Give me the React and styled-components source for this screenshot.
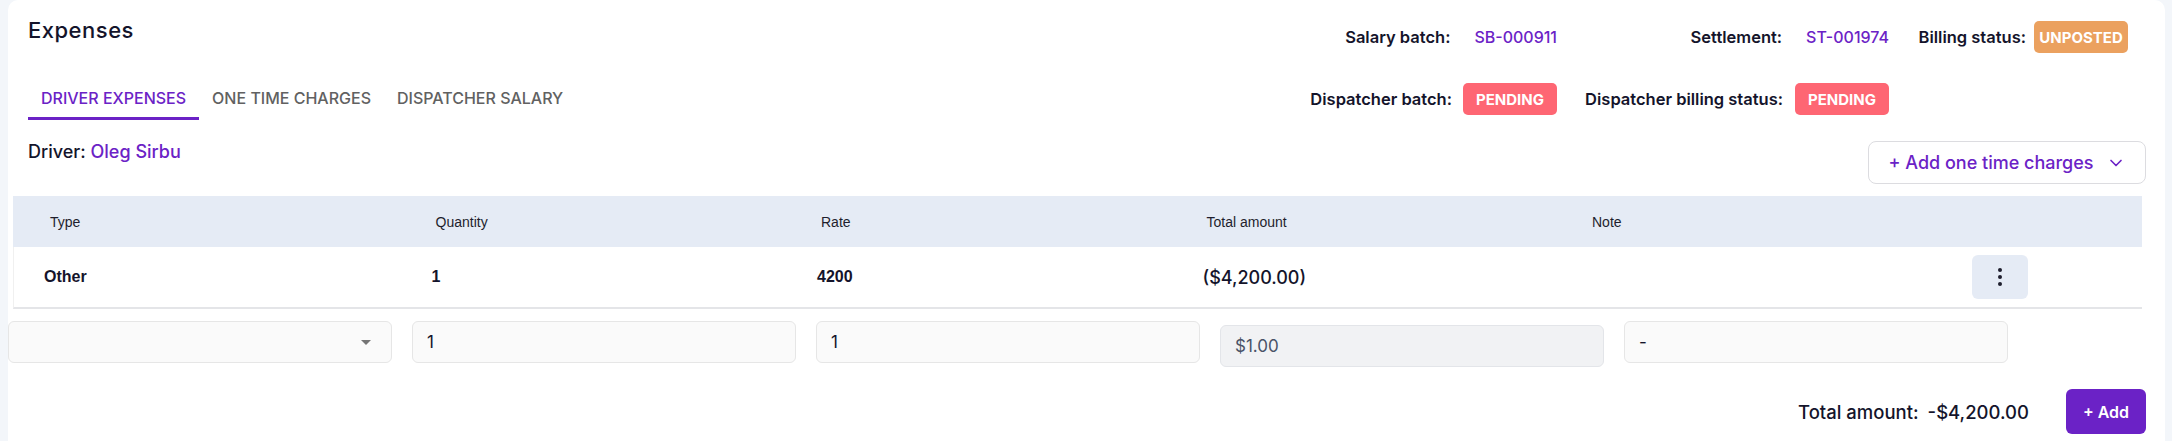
import React from 'react';
import styled, { createGlobalStyle } from 'styled-components';
import { ChevronDown } from 'lucide-react';

const purple = '#6b22c6';
const ink = '#14142b';

const GlobalStyle = createGlobalStyle`
  body {
    margin: 0;
    background: #f3f6fa;
    font-family: Inter, "Noto Sans", sans-serif;
    color: ${ink};
  }
`;

const Card = styled.section`
  margin: 0 7px 0 8px;
  background: #fff;
  border-radius: 10px;
  padding: 16px 0 40px;
  min-height: 470px;
  box-sizing: border-box;
`;

const Top = styled.div`
  display: flex;
  justify-content: space-between;
  padding: 0 37px 0 20px;
`;

const LeftCol = styled.div`
  display: flex;
  flex-direction: column;
`;

const Title = styled.h1`
  margin: 0;
  font-size: 22px;
  line-height: 28px;
  font-weight: 500;
  letter-spacing: 0.5px;
`;

const Tabs = styled.div`
  display: flex;
  margin-top: 32px;
`;

const Tab = styled.div`
  padding: 12px 13px 9px;
  font-size: 16px;
  line-height: 20px;
  font-weight: 500;
  text-transform: uppercase;
  color: ${p => (p.$active ? purple : '#616161')};
  border-bottom: 3px solid ${p => (p.$active ? purple : 'transparent')};
`;

const Meta = styled.div`
  display: grid;
  grid-template-columns: auto 332px 239px;
  grid-auto-rows: 32px;
  row-gap: 30px;
  padding-top: 5px;
`;

const MetaItem = styled.div`
  display: flex;
  align-items: center;
  justify-content: flex-end;
  gap: ${p => p.$gap}px;
`;

const MetaLabel = styled.span`
  font-size: 16.5px;
  font-weight: 600;
  color: ${ink};
`;

const MetaValue = styled.span`
  font-size: 16px;
  font-weight: 500;
  color: ${purple};
`;

const Badge = styled.span`
  display: inline-flex;
  align-items: center;
  justify-content: center;
  width: 94px;
  height: 32px;
  border-radius: 5px;
  background: ${p => p.$bg};
  color: #fff;
  font-size: 15px;
  font-weight: 700;
  text-transform: uppercase;
`;

const DriverRow = styled.div`
  display: flex;
  justify-content: space-between;
  align-items: flex-start;
  padding: 0 19px 0 20px;
  margin-top: 20px;
`;

const DriverText = styled.div`
  font-size: 18px;
  line-height: 24px;
  font-weight: 500;
  span { color: ${purple}; }
`;

const OutlineButton = styled.button`
  margin-top: 1px;
  width: 278px;
  height: 43px;
  display: flex;
  align-items: center;
  justify-content: center;
  gap: 12px;
  border: 1px solid #dcdce0;
  border-radius: 8px;
  background: #fff;
  color: ${purple};
  font-family: Inter, sans-serif;
  font-size: 18px;
  font-weight: 500;
`;

const Table = styled.div`
  margin: 12px 23px 0 5px;
`;

const HeaderRow = styled.div`
  display: grid;
  grid-template-columns: repeat(5, 385.5px) 1fr;
  align-items: center;
  height: 51px;
  background: #e5ebf5;
`;

const HeadCell = styled.div`
  padding-left: 37px;
  font-family: "Liberation Sans", Arial, sans-serif;
  font-size: 14px;
  color: #1e1e2d;
`;

const BodyRow = styled.div`
  display: grid;
  grid-template-columns: repeat(5, 385.5px) 1fr;
  align-items: center;
  height: 60px;
  border-left: 1px solid #f0f0f0;
  border-bottom: 2px solid #e4e5e8;
`;

const Cell = styled.div`
  padding-left: ${p => (p.$first ? 30 : 32)}px;
  font-family: ${p => (p.$amount ? 'Inter, sans-serif' : '"Liberation Sans", Arial, sans-serif')};
  font-size: ${p => (p.$amount ? 18 : 16)}px;
  font-weight: ${p => (p.$amount ? 500 : 700)};
  color: ${ink};
`;

const Kebab = styled.button`
  width: 56px;
  height: 44px;
  border: none;
  border-radius: 6px;
  background: #e5ebf5;
  display: flex;
  align-items: center;
  justify-content: center;
`;

const InputRow = styled.div`
  display: grid;
  grid-template-columns: repeat(5, 384px);
  gap: 20px;
  margin-top: 12px;
  align-items: start;
`;

const Field = styled.div`
  height: 42px;
  margin-top: ${p => (p.$disabled ? 4 : 0)}px;
  box-sizing: border-box;
  display: flex;
  align-items: center;
  justify-content: space-between;
  padding: 0 20px 0 14px;
  border: 1px solid ${p => (p.$disabled ? '#e3e5e9' : '#e6e6e6')};
  border-radius: 6px;
  background: ${p => (p.$disabled ? '#f1f2f4' : '#fafafa')};
  color: ${p => (p.$disabled ? '#4a5368' : ink)};
  font-size: 17px;
`;

const Footer = styled.div`
  display: flex;
  justify-content: flex-end;
  align-items: center;
  gap: 37px;
  padding-right: 19px;
  margin-top: 22px;
`;

const Total = styled.div`
  font-size: 18.5px;
  font-weight: 500;
  span { margin-left: 9px; }
`;

const AddButton = styled.button`
  width: 80px;
  height: 45px;
  border: none;
  border-radius: 6px;
  background: ${purple};
  color: #fff;
  font-family: Inter, sans-serif;
  font-size: 16px;
  font-weight: 600;
`;

const columns = ['Type', 'Quantity', 'Rate', 'Total amount', 'Note', ''];

export default function App() {
  return (
    <>
      <GlobalStyle />
      <Card>
        <Top>
          <LeftCol>
            <Title>Expenses</Title>
            <Tabs>
              <Tab $active>Driver expenses</Tab>
              <Tab>One time charges</Tab>
              <Tab>Dispatcher salary</Tab>
            </Tabs>
          </LeftCol>
          <Meta>
            <MetaItem $gap={24}>
              <MetaLabel>Salary batch:</MetaLabel>
              <MetaValue>SB-000911</MetaValue>
            </MetaItem>
            <MetaItem $gap={24}>
              <MetaLabel>Settlement:</MetaLabel>
              <MetaValue>ST-001974</MetaValue>
            </MetaItem>
            <MetaItem $gap={8}>
              <MetaLabel>Billing status:</MetaLabel>
              <Badge $bg="#eba15f">Unposted</Badge>
            </MetaItem>
            <MetaItem $gap={11}>
              <MetaLabel>Dispatcher batch:</MetaLabel>
              <Badge $bg="#fe6673">Pending</Badge>
            </MetaItem>
            <MetaItem $gap={12}>
              <MetaLabel>Dispatcher billing status:</MetaLabel>
              <Badge $bg="#fe6673">Pending</Badge>
            </MetaItem>
          </Meta>
        </Top>

        <DriverRow>
          <DriverText>
            Driver: <span>Oleg Sirbu</span>
          </DriverText>
          <OutlineButton>
            <span>+ Add one time charges</span>
            <ChevronDown size={20} strokeWidth={2} />
          </OutlineButton>
        </DriverRow>

        <Table>
          <HeaderRow>
            {columns.map(c => (
              <HeadCell key={c || 'actions'}>{c}</HeadCell>
            ))}
          </HeaderRow>
          <BodyRow>
            <Cell $first>Other</Cell>
            <Cell>1</Cell>
            <Cell>4200</Cell>
            <Cell $amount>($4,200.00)</Cell>
            <Cell />
            <Cell $first>
              <Kebab>
                <svg width="6" height="20" viewBox="0 0 6 20">
                  <circle cx="3" cy="3" r="2" fill="#1e1e2d" />
                  <circle cx="3" cy="10" r="2" fill="#1e1e2d" />
                  <circle cx="3" cy="17" r="2" fill="#1e1e2d" />
                </svg>
              </Kebab>
            </Cell>
          </BodyRow>
        </Table>

        <InputRow>
          <Field>
            <span />
            <svg width="10" height="5" viewBox="0 0 10 5">
              <path d="M0 0 L10 0 L5 5 Z" fill="#757575" />
            </svg>
          </Field>
          <Field>1</Field>
          <Field>1</Field>
          <Field $disabled>$1.00</Field>
          <Field>-</Field>
        </InputRow>

        <Footer>
          <Total>
            Total amount:<span>-$4,200.00</span>
          </Total>
          <AddButton>+ Add</AddButton>
        </Footer>
      </Card>
    </>
  );
}
